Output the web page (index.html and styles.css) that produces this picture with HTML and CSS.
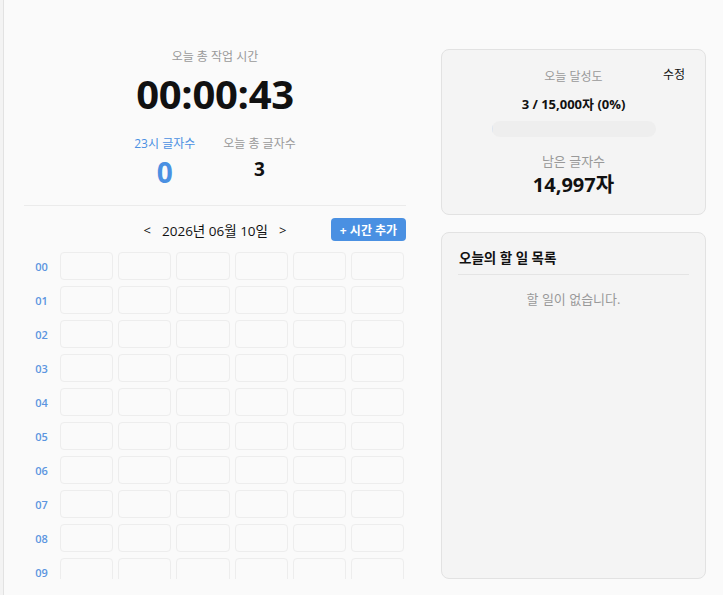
FILE: index.html
```html
<!DOCTYPE html>
<html lang="ko">
<head>
<meta charset="utf-8">
<title>작업 시간</title>
<link rel="stylesheet" href="styles.css">
</head>
<body>
<div class="shell">
  <main class="panel">
    <section class="left">
      <div class="summary">
        <div class="summary-label">오늘 총 작업 시간</div>
        <div class="clock">00:00:43</div>
        <div class="stats">
          <div class="stat">
            <div class="stat-label blue">23시 글자수</div>
            <div class="stat-value big blue">0</div>
          </div>
          <div class="stat">
            <div class="stat-label">오늘 총 글자수</div>
            <div class="stat-value">3</div>
          </div>
        </div>
      </div>

      <div class="nav">
        <div class="date-nav">
          <span class="arrow">&lt;</span>
          <span class="date">2026년 06월 10일</span>
          <span class="arrow">&gt;</span>
        </div>
        <button class="add-btn">+ 시간 추가</button>
      </div>

      <div class="timeline" id="timeline"></div>
    </section>

    <aside class="right">
      <div class="card goal">
        <div class="goal-head">
          <span class="goal-title">오늘 달성도</span>
          <span class="edit">수정</span>
        </div>
        <div class="goal-count">3 / 15,000자 (0%)</div>
        <div class="bar"><div class="bar-fill"></div></div>
        <div class="remain-label">남은 글자수</div>
        <div class="remain-value">14,997자</div>
      </div>

      <div class="card todo">
        <div class="todo-title">오늘의 할 일 목록</div>
        <div class="todo-empty">할 일이 없습니다.</div>
      </div>
    </aside>
  </main>
</div>
<script>
  // hour rows for the visible part of the day, six 10-minute slots each
  var tl = document.getElementById('timeline');
  for (var h = 0; h < 10; h++) {
    var row = document.createElement('div');
    row.className = 'hour-row';
    var lab = document.createElement('div');
    lab.className = 'hour';
    lab.textContent = (h < 10 ? '0' : '') + h;
    row.appendChild(lab);
    var slots = document.createElement('div');
    slots.className = 'slots';
    for (var i = 0; i < 6; i++) {
      var s = document.createElement('div');
      s.className = 'slot';
      slots.appendChild(s);
    }
    row.appendChild(slots);
    tl.appendChild(row);
  }
</script>
</body>
</html>
```

FILE: styles.css
```css
* { box-sizing: border-box; }

html, body {
  margin: 0;
  padding: 0;
  height: 100%;
}

body {
  background: #f3f3f3;
  font-family: "Open Sans", "Noto Sans CJK KR", sans-serif;
  color: #111;
  overflow: hidden;
}

.shell {
  margin-left: 3px;
  height: 595px;
  background: #fafafa;
  border-left: 1px solid #e2e2e2;
}

.panel {
  display: flex;
  gap: 35px;
  padding: 49px 17px 16px 20px;
  height: 100%;
}

/* left column */
.left {
  width: 382px;
  display: flex;
  flex-direction: column;
  min-height: 0;
}

.summary {
  display: flex;
  flex-direction: column;
  align-items: center;
  border-bottom: 1px solid #ebebeb;
  padding-bottom: 17px;
}

.summary-label {
  font-size: 12px;
  color: #999;
  line-height: 16px;
}

.clock {
  font-size: 40px;
  font-weight: 700;
  line-height: 50px;
  margin-top: 4px;
  letter-spacing: -0.3px;
}

.stats {
  display: flex;
  gap: 28px;
  margin-top: 17px;
}

.stat {
  display: flex;
  flex-direction: column;
  align-items: center;
}

.stat-label {
  font-size: 12px;
  color: #999;
  line-height: 16px;
}

.stat-value {
  font-size: 19px;
  font-weight: 700;
  line-height: 24px;
  margin-top: 5px;
}

.stat-value.big {
  font-size: 28px;
  line-height: 32px;
  margin-top: 4px;
}

.blue { color: #4a90e2; }

.nav {
  display: grid;
  grid-template-columns: 1fr auto 1fr;
  align-items: center;
  margin-top: 12px;
  height: 23px;
}

.date-nav {
  grid-column: 2;
  display: flex;
  align-items: center;
  gap: 8px;
  font-size: 13.5px;
  color: #111;
}

.arrow {
  font-size: 13px;
  padding: 0 3px;
}

.add-btn {
  grid-column: 3;
  justify-self: end;
  background: #4a90e2;
  color: #fff;
  border: none;
  border-radius: 4px;
  font-family: inherit;
  font-size: 12px;
  font-weight: 700;
  height: 23px;
  width: 75px;
  padding: 0;
}

.timeline {
  margin-top: 11px;
  flex: 1;
  min-height: 0;
  overflow: hidden;
  padding-right: 2px;
  display: flex;
  flex-direction: column;
  gap: 6px;
}

.hour-row {
  display: flex;
  align-items: center;
  flex-shrink: 0;
}

.hour {
  width: 35px;
  text-align: center;
  font-size: 11px;
  font-weight: 600;
  color: #5b95e0;
}

.slots {
  flex: 1;
  display: grid;
  grid-template-columns: repeat(6, 1fr);
  gap: 5px;
  margin-left: 1px;
}

.slot {
  height: 28px;
  border: 1px solid #ededed;
  border-radius: 4px;
  background: #fafafa;
}

/* right column */
.right {
  width: 265px;
  display: flex;
  flex-direction: column;
  gap: 17px;
}

.card {
  background: #f4f4f4;
  border: 1px solid #e2e2e2;
  border-radius: 8px;
}

.goal {
  height: 166px;
  display: flex;
  flex-direction: column;
  align-items: center;
  padding: 17px 20px 0;
}

.goal-head {
  position: relative;
  width: 100%;
  text-align: center;
  line-height: 16px;
}

.goal-title {
  font-size: 12px;
  color: #999;
}

.edit {
  position: absolute;
  right: 0;
  top: 0;
  font-size: 12px;
  color: #111;
}

.goal-count {
  margin-top: 10px;
  font-size: 13px;
  font-weight: 700;
  line-height: 18px;
}

.bar {
  margin-top: 8px;
  width: 164px;
  height: 16px;
  border-radius: 8px;
  background: #eeeeee;
  overflow: hidden;
}

.bar-fill {
  width: 0;
  height: 100%;
  border-left: 1px solid #dde5ef;
}

.remain-label {
  margin-top: 15px;
  font-size: 13px;
  color: #999;
  line-height: 18px;
}

.remain-value {
  margin-top: 3px;
  font-size: 20px;
  font-weight: 700;
  line-height: 24px;
}

.todo {
  flex: 1;
  padding: 15px 16px;
}

.todo-title {
  font-size: 13.5px;
  font-weight: 700;
  line-height: 20px;
  padding: 0 0 6px 1px;
  border-bottom: 1px solid #e4e4e4;
}

.todo-empty {
  text-align: center;
  margin-top: 14px;
  font-size: 13px;
  color: #999;
}
```
